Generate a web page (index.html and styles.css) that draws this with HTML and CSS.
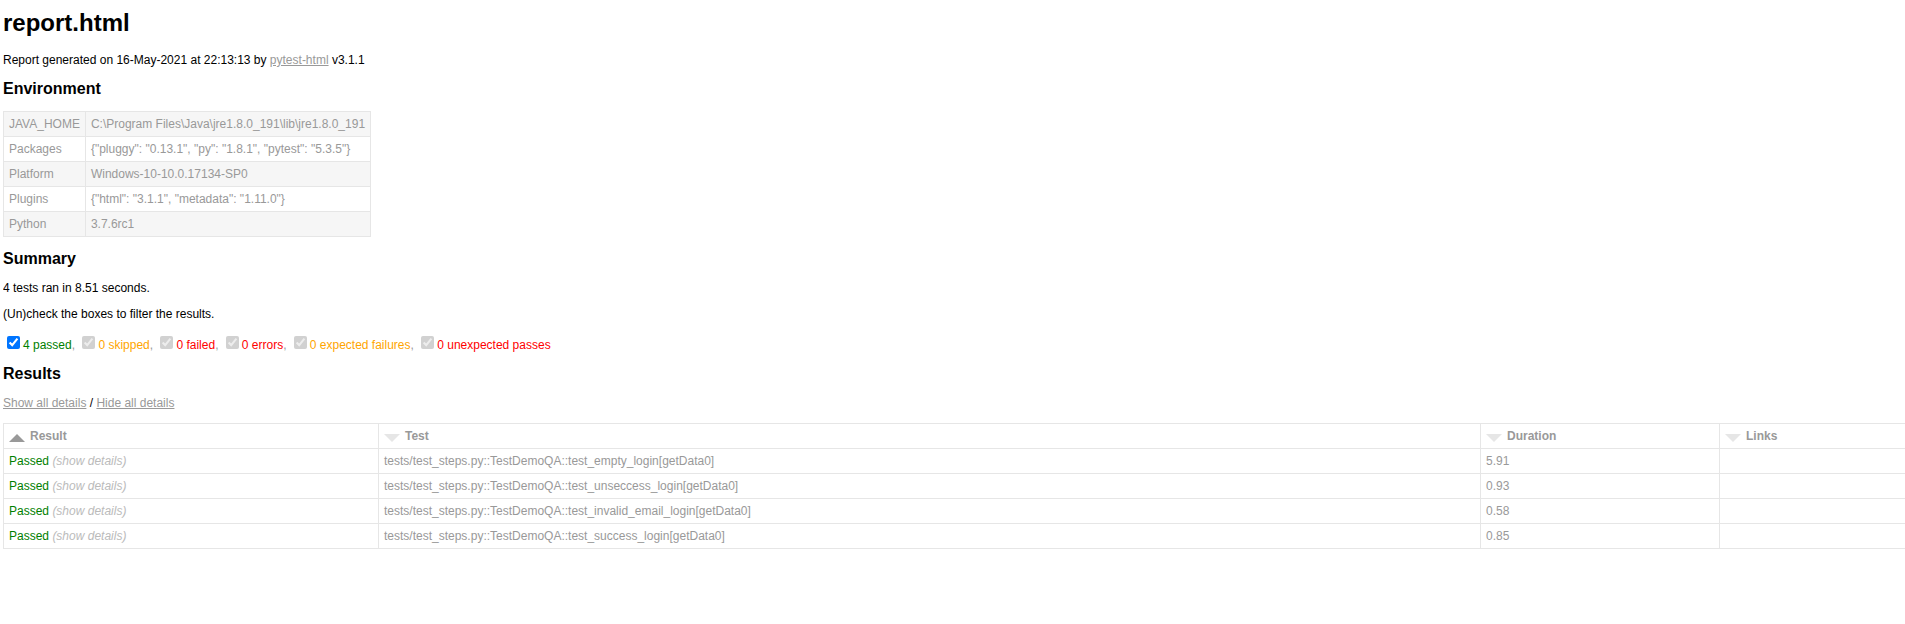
FILE: index.html
```html
<!DOCTYPE html>
<html>
<head>
<meta charset="utf-8">
<title>Test Report</title>
<link rel="stylesheet" href="styles.css">
</head>
<body>
<h1>report.html</h1>
<p>Report generated on 16-May-2021 at 22:13:13 by <a href="#">pytest-html</a> v3.1.1</p>
<h2>Environment</h2>
<table class="environment">
  <tr><td>JAVA_HOME</td><td>C:\Program Files\Java\jre1.8.0_191\lib\jre1.8.0_191</td></tr>
  <tr><td>Packages</td><td>{"pluggy": "0.13.1", "py": "1.8.1", "pytest": "5.3.5"}</td></tr>
  <tr><td>Platform</td><td>Windows-10-10.0.17134-SP0</td></tr>
  <tr><td>Plugins</td><td>{"html": "3.1.1", "metadata": "1.11.0"}</td></tr>
  <tr><td>Python</td><td>3.7.6rc1</td></tr>
</table>
<h2>Summary</h2>
<p>4 tests ran in 8.51 seconds. </p>
<p class="filter">(Un)check the boxes to filter the results.</p>
<div class="filters">
  <input checked type="checkbox" class="filter-box"><span class="passed">4 passed</span>,
  <input checked disabled type="checkbox" class="filter-box"><span class="skipped">0 skipped</span>,
  <input checked disabled type="checkbox" class="filter-box"><span class="failed">0 failed</span>,
  <input checked disabled type="checkbox" class="filter-box"><span class="error">0 errors</span>,
  <input checked disabled type="checkbox" class="filter-box"><span class="skipped">0 expected failures</span>,
  <input checked disabled type="checkbox" class="filter-box"><span class="failed">0 unexpected passes</span>
</div>
<h2>Results</h2>
<p class="details-links"><a href="#">Show all details</a>&nbsp;/&nbsp;<a href="#">Hide all details</a></p>
<table class="results-table">
  <colgroup>
    <col class="c-result"><col class="c-test"><col class="c-duration"><col class="c-links">
  </colgroup>
  <thead>
    <tr>
      <th><div class="sort-icon asc"></div>Result</th>
      <th><div class="sort-icon"></div>Test</th>
      <th><div class="sort-icon"></div>Duration</th>
      <th><div class="sort-icon"></div>Links</th>
    </tr>
  </thead>
  <tbody>
    <tr><td><span class="passed">Passed</span> <span class="expander">(show details)</span></td><td>tests/test_steps.py::TestDemoQA::test_empty_login[getData0]</td><td>5.91</td><td></td></tr>
    <tr><td><span class="passed">Passed</span> <span class="expander">(show details)</span></td><td>tests/test_steps.py::TestDemoQA::test_unseccess_login[getData0]</td><td>0.93</td><td></td></tr>
    <tr><td><span class="passed">Passed</span> <span class="expander">(show details)</span></td><td>tests/test_steps.py::TestDemoQA::test_invalid_email_login[getData0]</td><td>0.58</td><td></td></tr>
    <tr><td><span class="passed">Passed</span> <span class="expander">(show details)</span></td><td>tests/test_steps.py::TestDemoQA::test_success_login[getData0]</td><td>0.85</td><td></td></tr>
  </tbody>
</table>
</body>
</html>
```

FILE: styles.css
```css
html {
  overflow: hidden;
}
body {
  font-family: "Liberation Sans", Arial, Helvetica, sans-serif;
  font-size: 12px;
  color: #999;
  margin: 0 0 0 3px;
  background: #fff;
}
h1 {
  font-size: 24px;
  color: black;
  margin: 9px 0 16px;
}
h2 {
  font-size: 16px;
  color: black;
  margin: 13px 0;
}
p {
  color: black;
  margin: 12px 0;
}
a {
  color: #999;
}
table {
  border-collapse: collapse;
}
.environment td {
  padding: 5px;
  border: 1px solid #e6e6e6;
}
.environment tr:nth-child(odd) {
  background-color: #f6f6f6;
}
.filters {
  color: #999;
}
.filter-box {
  margin: 3px 3px 3px 4px;
}
.passed { color: green; }
.skipped { color: orange; }
.failed, .error { color: red; }
.details-links a {
  color: #999;
}
.details-links {
  color: black;
  margin-bottom: 13px;
}
.results-table {
  border: 1px solid #e6e6e6;
  color: #999;
  font-size: 12px;
  width: calc(100% + 20px);
  table-layout: fixed;
}
.c-result { width: 375px; }
.c-test { width: 1102px; }
.c-duration { width: 239px; }
.results-table th,
.results-table td {
  padding: 5px;
  border: 1px solid #e6e6e6;
  text-align: left;
  white-space: nowrap;
}
.results-table th {
  font-weight: bold;
}
.expander {
  color: #bbb;
  font-style: italic;
}
.sort-icon {
  float: left;
  margin-right: 5px;
  margin-top: 5px;
  width: 0;
  height: 0;
  border-left: 8px solid transparent;
  border-right: 8px solid transparent;
  border-top: 8px solid #e6e6e6;
}
.sort-icon.asc {
  border-top: 0;
  border-bottom: 8px solid #999;
}
```
